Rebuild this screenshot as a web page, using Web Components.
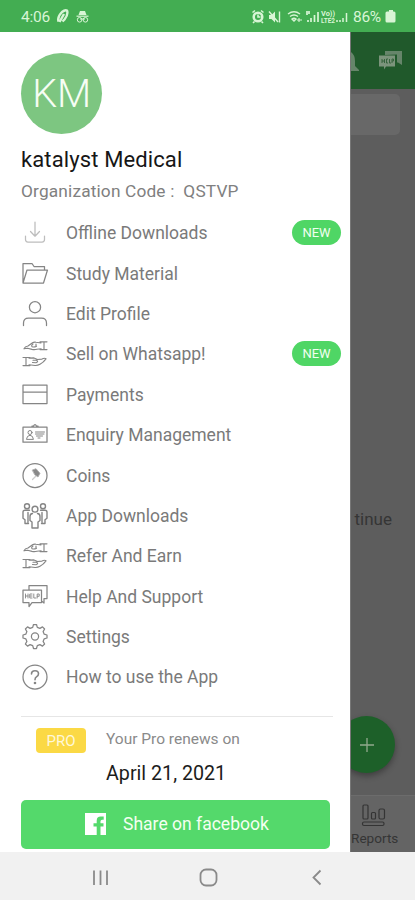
<!DOCTYPE html>
<html lang="en">
<head>
<meta charset="utf-8">
<title>Drawer</title>
<style>
html,body{margin:0;padding:0}
body{width:415px;height:900px;overflow:hidden;font-family:Roboto,"Liberation Sans",sans-serif;background:#fff}
</style>
</head>
<body>
<app-screen></app-screen>
<script>
const define = (name, html) => {
  const t = document.createElement('template');
  t.innerHTML = html;
  customElements.define(name, class extends HTMLElement {
    constructor() {
      super();
      this.attachShadow({mode: 'open'}).appendChild(t.content.cloneNode(true));
    }
  });
};

const ICONS = {
  download: '<g stroke="#bdbdbd"><path d="M14 3v14M9.500 12.500L14 17.200l4.500-4.700M4.500 17v3.500q0 2.500 2.500 2.500h14q2.500 0 2.500-2.500V17"/></g>',
  folder: '<path d="M2 23V3.500h9l2 3h10.500v3.500M2 23L6 10h20.500L22.500 23z"/>',
  user: '<circle cx="14" cy="7.200" r="5.600"/><path d="M2.500 25.500v-2.500q0-5 5-5h13q5 0 5 5v2.500"/>',
  hands: '<g stroke-width="1.150"><path d="M3 8.800q1-2.300 4-2.800l4.500-3.200q1.500-1 3.500-.6l5 .8M3 8.800l3.500-.6 4.500 1.200q2.500.6 5-.1l4-.6M12 4q-2.200 1.500-.8 2.800 2 .6 4.300-.6M15 4v2.500M19 1.800h7M19 9.600h7M23 2v7.500"/><path d="M25 18.800q-1.500-1.200-4 .3l-4.500.4-3.500-1.600-5 .2M8 24.800l6 .7q2.500.2 5-1.200 3.500-2 6-5.500M12 20.200h3.500q2.500 1.500-.5 2.500l-3.500-.2M9 17.500H2M9 25.600H2M5 17.700v7.800"/></g>',
  card: '<path d="M2 4h24v18.500H2zM2 11h24"/>',
  badge: '<path d="M2 6.200h24v15H2zM11 6V5h1.500q1.500-3 3 0H17v1"/><g stroke-width="1"><circle cx="9" cy="11.500" r="2"/><path d="M5.500 18q.3-3.500 3.500-3.700 3 .2 3.400 3.700zM14.500 11h9M14.500 13h8.500M15.500 15h6M17 17h2"/></g>',
  coin: '<circle cx="14" cy="13.500" r="12"/><path d="M11.500 8l3.500-1.300 4 4.600-2 3.700-3-2z" fill="#888" stroke="#aaa" stroke-width=".8"/><path d="M11.500 17.500l3-3" stroke="#ccc"/>',
  people: '<g stroke-width="1.400"><circle cx="6" cy="4.300" r="2.500"/><circle cx="22" cy="4.300" r="2.500"/><circle cx="14" cy="7.200" r="2.900"/><path d="M8.500 8.300H4q-2 0-2 2v6l2 1.500V21.500h3.500M19.500 8.300H24q2 0 2 2v6l-2 1.500V21.500h-3.500M11.500 11.500q-2.500.3-2.500 3v4l2 1.500V26h6v-6l2-1.500v-4q0-2.700-2.500-3M7 10.500v10M21 10.500v10"/></g>',
  help: '<path d="M8 7V2.500h18v13h-3V20l-2.500-2M2 7h18.500v12.500H11L8 23.500v-4H2z"/><g stroke-width=".9"><path d="M4.500 11v4M7 11v4M4.500 13H7M11 11H8.800v4H11M8.800 13H11M12.800 11v4H15M16.200 15v-4h2v2.300h-2"/></g>',
  gear: '<g transform="translate(0 -.5)"><circle cx="14" cy="14" r="3.600"/><path d="M11.700 4.800L12.500 2h3l.8 2.800 2.600 1.100 2.600-1.500 2.100 2.100-1.500 2.600 1.100 2.600 2.800.8v3l-2.800.8-1.100 2.600 1.500 2.600-2.100 2.100-2.600-1.500-2.600 1.100-.8 2.800h-3l-.8-2.800-2.600-1.100-2.600 1.500-2.100-2.100 1.500-2.600-1.100-2.600-2.800-.8v-3l2.800-.8 1.100-2.600-1.500-2.600 2.100-2.100 2.600 1.500z"/></g>',
  question: '<circle cx="14" cy="14" r="12"/><path d="M10.500 11q0-3.300 3.500-3.300t3.500 3q0 1.800-1.800 2.900Q14 14.600 14 16.800" stroke-width="1.600"/><circle cx="14" cy="20" r=".7" fill="#777"/>'
};

customElements.define('line-icon', class extends HTMLElement {
  connectedCallback() {
    this.attachShadow({mode: 'open'}).innerHTML = `
      <style>:host{display:block;width:28px;height:28px}svg{display:block}</style>
      <svg width="28" height="28" viewBox="0 0 28 28" fill="none" stroke="#858585" stroke-width="1.25" stroke-linejoin="round" stroke-linecap="round">${ICONS[this.getAttribute('name')]}</svg>`;
  }
});

customElements.define('menu-row', class extends HTMLElement {
  connectedCallback() {
    this.attachShadow({mode: 'open'}).innerHTML = `
      <style>
        :host{display:flex;align-items:center;height:40.400px;color:#7a7a7a;font-size:17.500px}
        .label{margin-left:17px;flex:1;white-space:nowrap}
        .new{width:49px;height:25px;border-radius:13px;background:#4fd665;color:#f0fff0;font-size:13px;line-height:25px;text-align:center;margin:-1px 9px 0 0}
      </style>
      <line-icon name="${this.getAttribute('icon')}"></line-icon>
      <span class="label"><slot></slot></span>
      ${this.hasAttribute('new') ? '<span class="new">NEW</span>' : ''}`;
  }
});

define('status-bar', `
<style>
:host{display:flex;align-items:center;height:32px;background:#43ad52;color:#d8f5d5;box-sizing:border-box;padding:2px 0 0 21px}
.time{font-size:15.500px;width:35px;letter-spacing:-.2px}
.pct{font-size:15.500px;margin-left:4px;width:31px;letter-spacing:-.3px}
.gap{flex:1}
svg{display:block}
</style>
<span class="time">4:06</span>
<svg width="36" height="18" viewBox="0 0 36 18" fill="none" stroke="#d8f5d5">
  <path d="M2.500 13.500Q1 9 6 4q3-2.500 5-1.500 1.500 4-2.500 9l-2 2M3.500 14L8 6" stroke-width="2.400"/>
  <path d="M22.500 7l1.500-4h5l1.500 4z" fill="#d8f5d5" stroke="none"/><path d="M20.500 8.200h12" stroke-width="1.200"/>
  <circle cx="23.600" cy="11.800" r="2.300"/><circle cx="29.400" cy="11.800" r="2.300"/><path d="M24 11h5"/>
</svg>
<span class="gap"></span>
<svg width="98" height="18" viewBox="0 0 98 18" fill="none" stroke="#d8f5d5" stroke-width="1.400">
  <circle cx="7" cy="9" r="4.300" stroke-width="2.500"/><path d="M7 6.500V9h2.500M1.500 4.500L4 2.500M12.500 4.500L10 2.500M3.500 13.500L2 15M10.500 13.500L12 15" stroke-width="1.600"/>
  <path d="M18 7h2.500L24 3.500v11L20.500 11H18z" fill="#d8f5d5" stroke="none"/><path d="M18 3.500l9 10.500M28.500 3.500v11"/>
  <path d="M37 6q6-4.500 12 0M39 8.500q4-3 8 0M41 11q2-1.500 4 0l-2 2z"/><path d="M46 12h5M48 10v4" stroke-width="1.100"/>
  <path d="M56 3v4M58 3v3M57 14v-2M60 14v-4M63.500 14V7M67 14V4" stroke-width="1.700"/>
  <path d="M89 14v-2M92 14v-4M95.500 14V5M86 14v-2" stroke-width="1.500"/>
  <g fill="#d8f5d5" stroke="none" font-family="Roboto,sans-serif" font-weight="700" font-size="7"><text x="70" y="8" textLength="14" lengthAdjust="spacingAndGlyphs">Vo))</text><text x="70" y="14.500" textLength="14" lengthAdjust="spacingAndGlyphs">LTE2</text></g>
</svg>
<span class="pct">86%</span>
<svg width="31" height="18" viewBox="0 0 31 18"><path d="M3 3.500h2V2h4v1.500h1q1.500 0 1.500 1.500v8q0 1.500-1.500 1.500H3Q1.500 14.500 1.500 13V5q0-1.500 1.500-1.500z" fill="#d8f5d5"/></svg>
`);

define('side-drawer', `
<style>
:host{display:block;width:350px;height:820px;background:#fff;box-sizing:border-box;padding:21px 0 0 21px;overflow:hidden}
.avatar{width:81px;height:81px;border-radius:50%;background:#7dc681;color:#f6fdf4;font-size:39.500px;font-weight:300;line-height:81px;text-align:center;letter-spacing:-.2px}
.name{font-size:22px;line-height:28px;margin-top:12px;color:#161616;letter-spacing:.12px;white-space:nowrap}
.org{font-size:17.300px;line-height:22px;margin-top:6px;color:#808080;white-space:pre;letter-spacing:.16px}
.menu{display:flex;flex-direction:column;margin-top:11px}
.pro{display:flex;border-top:1px solid #e6e6e6;margin:18px 17px 0 0;padding:10px 0 0 15px;height:73px}
.tag{width:50px;height:25px;border-radius:4px;background:#fbd945;color:#fff8d8;font-size:15px;line-height:26px;text-align:center;margin-top:1px}
.renew{margin-left:20px}
.l1{font-size:15.500px;line-height:24px;color:#8a8a8a}
.l2{font-size:19.700px;line-height:28px;color:#1c1c1c;margin-top:9px}
.share{width:309px;height:49px;border-radius:5px;background:#54d96b;display:flex;align-items:center;box-sizing:border-box;padding-left:64px;color:#f3fff0;font-size:17.550px}
.share span{margin-left:17px;white-space:nowrap}
</style>
<div class="avatar">KM</div>
<div class="name">katalyst Medical</div>
<div class="org">Organization Code :  QSTVP</div>
<div class="menu">
<menu-row icon="download" new>Offline Downloads</menu-row>
<menu-row icon="folder">Study Material</menu-row>
<menu-row icon="user">Edit Profile</menu-row>
<menu-row icon="hands" new>Sell on Whatsapp!</menu-row>
<menu-row icon="card">Payments</menu-row>
<menu-row icon="badge">Enquiry Management</menu-row>
<menu-row icon="coin">Coins</menu-row>
<menu-row icon="people">App Downloads</menu-row>
<menu-row icon="hands">Refer And Earn</menu-row>
<menu-row icon="help">Help And Support</menu-row>
<menu-row icon="gear">Settings</menu-row>
<menu-row icon="question">How to use the App</menu-row>
</div>
<div class="pro"><div class="tag">PRO</div><div class="renew"><div class="l1">Your Pro renews on</div><div class="l2">April 21, 2021</div></div></div>
<div class="share"><svg width="21" height="22" viewBox="0 0 21 22"><path d="M0 0h21v22h-5.500v-8.500h3v-3.300h-3V8.300q0-1.500 1.700-1.500h1.500V3.500h-3q-4 0-4 4.200v2.500H8.500v3.300h3.200V22H0z" fill="#fff"/></svg><span>Share on facebook</span></div>
`);

define('dimmed-page', `
<style>
:host{display:flex;flex-direction:column;width:65px;height:820px;background:#5d5d5d;overflow:hidden;box-sizing:border-box;border-left:1px solid #777;color:#353535}
.top{height:57px;background:#20592b;flex:none}
.search{height:41px;width:57px;margin-left:-8px;margin-top:5px;border-radius:5px;background:#686868;flex:none}
.mid{flex:1;padding-top:372px}
.txt{font-size:17px;line-height:24px;width:41px;text-align:right;white-space:nowrap}
.fab{width:57px;height:57px;border-radius:50%;background:#1d6029;box-shadow:0 3px 6px #0005;margin:185px 0 0 -13px;display:flex;align-items:center;justify-content:center}
.tab{height:57px;background:#646464;border-top:1px solid #6c6c6c;box-sizing:border-box;flex:none}
.tab span{display:block;font-size:13.600px;line-height:18px}
svg{display:block}
</style>
<div class="top"><svg width="64" height="57" viewBox="0 0 64 57"><path d="M0 20q4 3 4 9v5l4 4v1H0z" fill="#66856a"/><path d="M34 23v-4h17v14l-4-2.500h-1v-8z" fill="#66856a"/><path d="M28 23.500h16v11H35l-2 3v-3h-5z" fill="#7c947c"/><path d="M31 27v4M33.500 27v4M31 29h2.500M37 27h-1.500v4H37M38.500 27v4H40M41 31v-4h1.500v2H41" stroke="#2f5f37" fill="none" stroke-width=".9"/></svg></div>
<div class="search"></div>
<div class="mid"><div class="txt">tinue</div><div class="fab"><svg width="16" height="16" viewBox="0 0 16 16" stroke="#91a98d" stroke-width="1.300"><path d="M8 1v14M1 8h14"/></svg></div></div>
<div class="tab"><svg width="50" height="33" viewBox="0 0 50 33" fill="none" stroke="#343434" stroke-width="1.200"><rect x="12" y="9" width="5" height="14" rx="1"/><rect x="20.500" y="16.500" width="4" height="6.500" rx="1"/><rect x="28" y="13" width="5.500" height="10" rx="1.500"/><rect x="11.500" y="26" width="21.500" height="3.500" rx="1.500"/></svg><span>Reports</span></div>
`);

define('nav-bar', `
<style>:host{display:block;height:48px;background:#f1f1f1}svg{display:block}</style>
<svg width="415" height="48" viewBox="0 0 415 48" fill="none" stroke="#8a8a8a" stroke-width="1.800"><path d="M94 18.500v14.500M100.500 18.500v14.500M107 18.500v14.500"/><rect x="200.500" y="17.500" width="16" height="16" rx="5.500"/><path d="M320.500 18.500l-7 7 7 7"/></svg>
`);

define('app-screen', `
<style>:host{display:flex;flex-direction:column;width:415px;height:900px;overflow:hidden}.body{display:flex;height:820px}</style>
<status-bar></status-bar><div class="body"><side-drawer></side-drawer><dimmed-page></dimmed-page></div><nav-bar></nav-bar>
`);
</script>
</body>
</html>
